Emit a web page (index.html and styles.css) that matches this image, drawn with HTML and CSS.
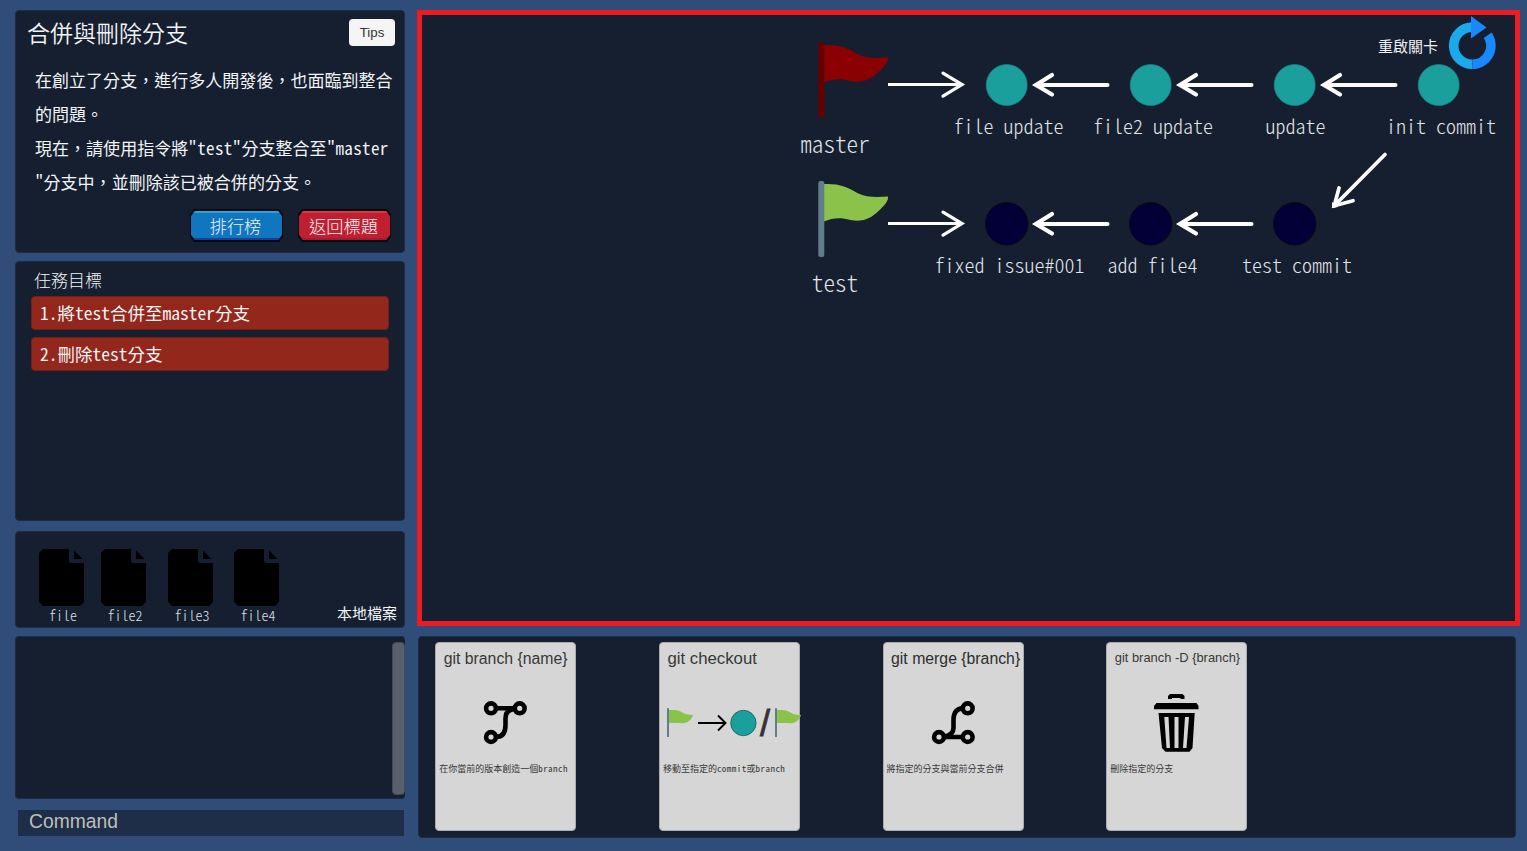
FILE: index.html
```html
<!DOCTYPE html>
<html lang="zh-Hant">
<head>
<meta charset="utf-8">
<title>合併與刪除分支</title>
<link rel="stylesheet" href="styles.css">
</head>
<body>
<svg class="defs" width="0" height="0" aria-hidden="true">
  <defs>
    <path id="cloth" d="M5.500 3C22 2.500 29 6 39 12C49 17 60 16 69.500 15.500C71 19 66 25 58 32C50 39 42 41 32 39C22 36 14 37 5.500 40.500Z"/>
    <path id="doc" d="M4 0H30V12Q30 14 32 14H45V53L41 57H4L0 53V4Z M35 1.500V10H43.500Z"/>
    <g id="parent-arrow" fill="none" stroke="#fff" stroke-linecap="round">
      <path stroke-width="4" d="M4 0H73.500"/>
      <path stroke-width="4.200" d="M18 -10L2 0L18 9.500"/>
      <path fill="#fff" stroke="none" d="M-1 0L7 -4.500V4.500Z"/>
    </g>
    <g id="head-arrow" fill="none" stroke="#fff">
      <path stroke-width="3" d="M0 0H74"/>
      <path stroke-width="3.200" stroke-linecap="round" d="M55 -11.500L74 0L55 11.500"/>
    </g>
  </defs>
</svg>
<div class="game">
  <aside class="side">
    <section class="panel brief">
      <header class="brief-head">
        <h1>合併與刪除分支</h1>
        <button class="tips">Tips</button>
      </header>
      <p class="story">在創立了分支，進行多人開發後，也面臨到整合<br>的問題。<br>現在，請使用指令將<span>"test"</span>分支整合至<span>"master</span><br>"分支中，並刪除該已被合併的分支。</p>
      <div class="actions">
        <button class="pixel blue"><span>排行榜</span></button>
        <button class="pixel red"><span>返回標題</span></button>
      </div>
    </section>
    <section class="panel goals">
      <h2>任務目標</h2>
      <ul>
        <li>1.將test合併至master分支</li>
        <li>2.刪除test分支</li>
      </ul>
    </section>
    <section class="panel files">
      <div class="file f1"><svg width="46" height="57"><use href="#doc"/></svg><span>file</span></div>
      <div class="file f2"><svg width="46" height="57"><use href="#doc"/></svg><span>file2</span></div>
      <div class="file f3"><svg width="46" height="57"><use href="#doc"/></svg><span>file3</span></div>
      <div class="file f4"><svg width="46" height="57"><use href="#doc"/></svg><span>file4</span></div>
      <span class="files-title">本地檔案</span>
    </section>
    <section class="panel console"><div class="thumb"></div></section>
    <div class="command">Command</div>
  </aside>
  <main class="main">
    <section class="board">
      <svg width="1093" height="606" viewBox="422 15 1093 606">
        <g transform="translate(818.300 42)"><use href="#cloth" fill="#8b0000"/><rect width="6" height="76" rx="2" fill="#640000"/></g>
        <g transform="translate(818.300 181)"><use href="#cloth" fill="#8bc34a"/><rect width="6" height="76" rx="2" fill="#607d8b"/></g>
        <use href="#head-arrow" x="888" y="84.600"/>
        <use href="#head-arrow" x="888" y="223.600"/>
        <use href="#parent-arrow" x="1034" y="85"/>
        <use href="#parent-arrow" x="1178" y="85"/>
        <use href="#parent-arrow" x="1322" y="85"/>
        <use href="#parent-arrow" x="1034" y="224"/>
        <use href="#parent-arrow" x="1178" y="224"/>
        <g fill="none" stroke="#fff" stroke-width="3.700" stroke-linecap="round">
          <path d="M1385 154.500L1334.500 205.500"/><path d="M1339 188L1334.300 205.700L1353 200.700"/>
        </g>
        <path fill="#fff" d="M1332 208V202L1338 207Z"/>
        <g fill="#1b9f9d" stroke="#178581" stroke-width=".8">
          <circle cx="1006.700" cy="85" r="20.500"/><circle cx="1150.700" cy="85" r="20.500"/>
          <circle cx="1294.700" cy="85" r="20.500"/><circle cx="1438.700" cy="85" r="20.500"/>
        </g>
        <g fill="#030037" stroke="#070b1b" stroke-width="1">
          <circle cx="1006.700" cy="223.800" r="21.300"/><circle cx="1150.700" cy="223.800" r="21.300"/>
          <circle cx="1294.700" cy="223.800" r="21.300"/>
        </g>
        <g class="ref">
          <text x="835" y="153">master</text>
          <text x="835" y="292">test</text>
        </g>
        <g class="commit">
          <text x="1008.500" y="134">file update</text>
          <text x="1153" y="134">file2 update</text>
          <text x="1295.500" y="134">update</text>
          <text x="1441" y="134">init commit</text>
          <text x="1009.500" y="273">fixed issue#001</text>
          <text x="1152.500" y="273">add file4</text>
          <text x="1297" y="273">test commit</text>
        </g>
        <text class="reset" x="1378" y="52">重啟關卡</text>
        <g fill="none" stroke-width="9.600">
          <path stroke="#1aa9ea" d="M1472.300 27.100A18.600 18.600 0 0 0 1472.300 64.300"/>
          <path stroke="#1888fc" d="M1487.700 35.300A18.600 18.600 0 0 1 1472.300 64.300"/>
        </g>
        <path fill="#1888fc" d="M1471 16L1486.500 27.500L1471 38.500Z"/>
      </svg>
    </section>
    <section class="panel cards">
      <article class="card">
        <h3 class="t1">git branch {name}</h3>
        <svg class="art" width="141" height="62" viewBox="0 50 141 62">
          <g fill="none" stroke="#000" stroke-width="4.600">
            <circle cx="56" cy="66.300" r="4.900"/><circle cx="84.700" cy="66.300" r="4.900"/><circle cx="56" cy="95" r="4.900"/>
            <path d="M61 66.300H80M80 67Q70.500 68 70.500 76V83Q70.500 95 61 95"/>
          </g>
        </svg>
        <p>在你當前的版本創造一個<span>branch</span></p>
      </article>
      <article class="card">
        <h3 class="t2">git checkout</h3>
        <svg class="art" width="141" height="62" viewBox="0 50 141 62">
          <g id="mini-flag"><path fill="#8bc34a" d="M9.500 68H15C23 68 23 73 34 73C32 80 26 82 20 81H9.500Z"/><path stroke="#607d8b" stroke-width="2" d="M9 66.300V95"/></g>
          <path fill="none" stroke="#000" stroke-width="1.900" d="M39 81H66M59 73.500L66.500 81L59 88.500"/>
          <circle cx="84.400" cy="81" r="12.700" fill="#1b9f9d" stroke="#165d5b" stroke-width=".8"/>
          <text class="slash" x="101" y="93.500">/</text>
          <use href="#mini-flag" x="108"/>
        </svg>
        <p>移動至指定的<span>commit</span>或<span>branch</span></p>
      </article>
      <article class="card">
        <h3 class="t3">git merge {branch}</h3>
        <svg class="art" width="141" height="62" viewBox="0 50 141 62">
          <g fill="none" stroke="#000" stroke-width="4.600">
            <circle cx="84.700" cy="66.300" r="4.900"/><circle cx="56" cy="95" r="4.900"/><circle cx="84.700" cy="95" r="4.900"/>
            <path d="M61 95H80M61 94.500Q70.500 93 70.500 86V78Q70.500 66.800 80 66.300"/>
          </g>
        </svg>
        <p>將指定的分支與當前分支合併</p>
      </article>
      <article class="card">
        <h3 class="t4">git branch -D {branch}</h3>
        <svg class="art" width="141" height="62" viewBox="0 50 141 62">
          <path d="M62 57V54L64 52H76.500L78.500 54V57H74.500V56H66V57Z"/>
          <path d="M50.500 61H90.500L92.500 64V67.300H48V64Z"/>
          <path fill-rule="evenodd" d="M52.500 71H88.700L86.500 106L83.500 109.700H59.500L56 106ZM58.300 75L60.500 106H64L62.500 75ZM68.500 75V106H72.500V75ZM79 75L77 106H80.500L83 75Z"/>
        </svg>
        <p>刪除指定的分支</p>
      </article>
    </section>
  </main>
</div>
</body>
</html>
```
FILE: styles.css
```css
* { box-sizing: border-box; }
body {
  margin: 0;
  background: #304d79;
  color: #f2f4f6;
  font-family: "Noto Sans CJK TC", sans-serif;
  font-feature-settings: "hwid", "liga" 0;
  overflow: hidden;
}
h1, h2, h3, p, ul { margin: 0; padding: 0; font-weight: 400; }
ul { list-style: none; }
button { border: 0; padding: 0; font: inherit; font-feature-settings: inherit; color: inherit; }
svg { display: block; }
.defs { position: absolute; }
.game {
  display: grid;
  grid-template-columns: 390px 1103px;
  column-gap: 12px;
  width: 1527px;
  height: 851px;
  padding: 10px 0 0 15px;
}
.panel {
  background: #151f30;
  border: 1px solid #1d2b44;
  border-radius: 4px;
}
.side {
  display: grid;
  grid-template-rows: 243px 260px 97px 164px 27px;
  row-gap: 8px;
  align-content: start;
}
.brief { padding: 8px 9px 0 11px; }
.brief-head { display: flex; justify-content: space-between; align-items: flex-start; height: 44px; }
h1 { margin-top: -1px; font-size: 23px; font-weight: 350; line-height: 29px; }
.tips {
  width: 46px;
  height: 27px;
  border-radius: 4px;
  background: #f5f5f5;
  color: #323232;
  font: 13.300px/27px "Liberation Sans", sans-serif;
}
.story { height: 137px; padding-left: 8px; font-size: 17.050px; line-height: 34px; white-space: nowrap; }
.story span { letter-spacing: .35px; }
.actions { display: flex; justify-content: flex-end; gap: 15px; padding: 9px 4px 0 0; }
.pixel {
  width: 93px;
  height: 33px;
  padding: 2px 1px;
  background: #05080e;
  clip-path: polygon(4px 0, calc(100% - 4px) 0, 100% 5px, 100% calc(100% - 5px), calc(100% - 4px) 100%, 4px 100%, 0 calc(100% - 5px), 0 5px);
}
.pixel span {
  display: block;
  height: 29px;
  padding-right: 2px;
  font-size: 17.200px;
  font-weight: 300;
  line-height: 25px;
  clip-path: polygon(4px 0, calc(100% - 4px) 0, 100% 5px, 100% calc(100% - 5px), calc(100% - 4px) 100%, 4px 100%, 0 calc(100% - 5px), 0 5px);
}
.blue span { background: #1076bf; border-top: 2px solid #1ba8e0; border-bottom: 2px solid #153f99; }
.red span { background: #c01f31; border-top: 2px solid #df3346; border-bottom: 2px solid #a21a33; }
.goals { padding: 6px 15px; }
h2 { padding-left: 3px; font-size: 17px; font-weight: 300; line-height: 24px; height: 28px; }
.goals ul { display: grid; row-gap: 7px; }
.goals li {
  height: 34px;
  padding-left: 8px;
  border: 1px solid #742018;
  border-radius: 4px;
  background: #94271c;
  font-size: 17.500px;
  line-height: 31px;
}
.files { display: flex; margin-top: 2px; height: 97px; padding: 17px 7px 0 23px; }
.file { width: 46px; text-align: center; font-size: 14px; font-weight: 300; line-height: 18px; color: #dde0e4; }
.file svg { fill: #000; }
.file span { display: block; padding-left: 2px; white-space: nowrap; }
.f2 { margin-left: 16px; }
.f3 { margin-left: 21px; }
.f4 { margin-left: 20px; }
.files-title { margin: 53px 0 0 auto; font-size: 15px; line-height: 22px; }
.console { display: flex; justify-content: flex-end; margin-top: 2px; height: 163px; padding-top: 5px; border-right: 0; }
.thumb { width: 13px; height: 153px; border: 1px solid #454c58; border-radius: 4px; background: #59606c; }
.command {
  margin: 4px 1px 0 3px;
  height: 26px;
  padding-left: 11px;
  background: #1e2d48;
  color: #bcc0b9;
  font: 19.300px/24px "Liberation Sans", sans-serif;
}
.main { display: grid; grid-template-rows: 616px 202px; row-gap: 10px; align-content: start; }
.board { border: 5px solid #ed1c24; background: #151f30; }
.board text { fill: #e2e5e8; white-space: pre; }
.ref text { font-size: 23.200px; font-weight: 300; text-anchor: middle; }
.commit text { font-size: 20px; font-weight: 300; text-anchor: middle; }
.board .reset { font-size: 15px; fill: #f0f2f4; }
.cards { display: flex; gap: 82.700px; width: 1098px; margin-left: 1px; padding: 5px 0 0 16.200px; }
.card { width: 141px; height: 189px; border: 1px solid #a9aba8; border-radius: 4px; background: #d6d6d6; color: #383838; }
h3 { height: 49px; padding: 6px 0 0 8px; margin-left: -.5px; font: 15.800px/20px "Liberation Sans", sans-serif; white-space: nowrap; }
.t2 { font-size: 16.800px; }
.t3 { color: #2d2d2d; }
.t4 { font-size: 12.900px; line-height: 17px; }
.art { margin-left: -1px; overflow: visible; }
.slash { font: 36px "Liberation Sans", sans-serif; fill: #333; stroke: #333; stroke-width: .8px; }
.card p { padding: 7px 0 0 3px; font-size: 9px; line-height: 16px; white-space: nowrap; }
.card p span { letter-spacing: .45px; }
```
